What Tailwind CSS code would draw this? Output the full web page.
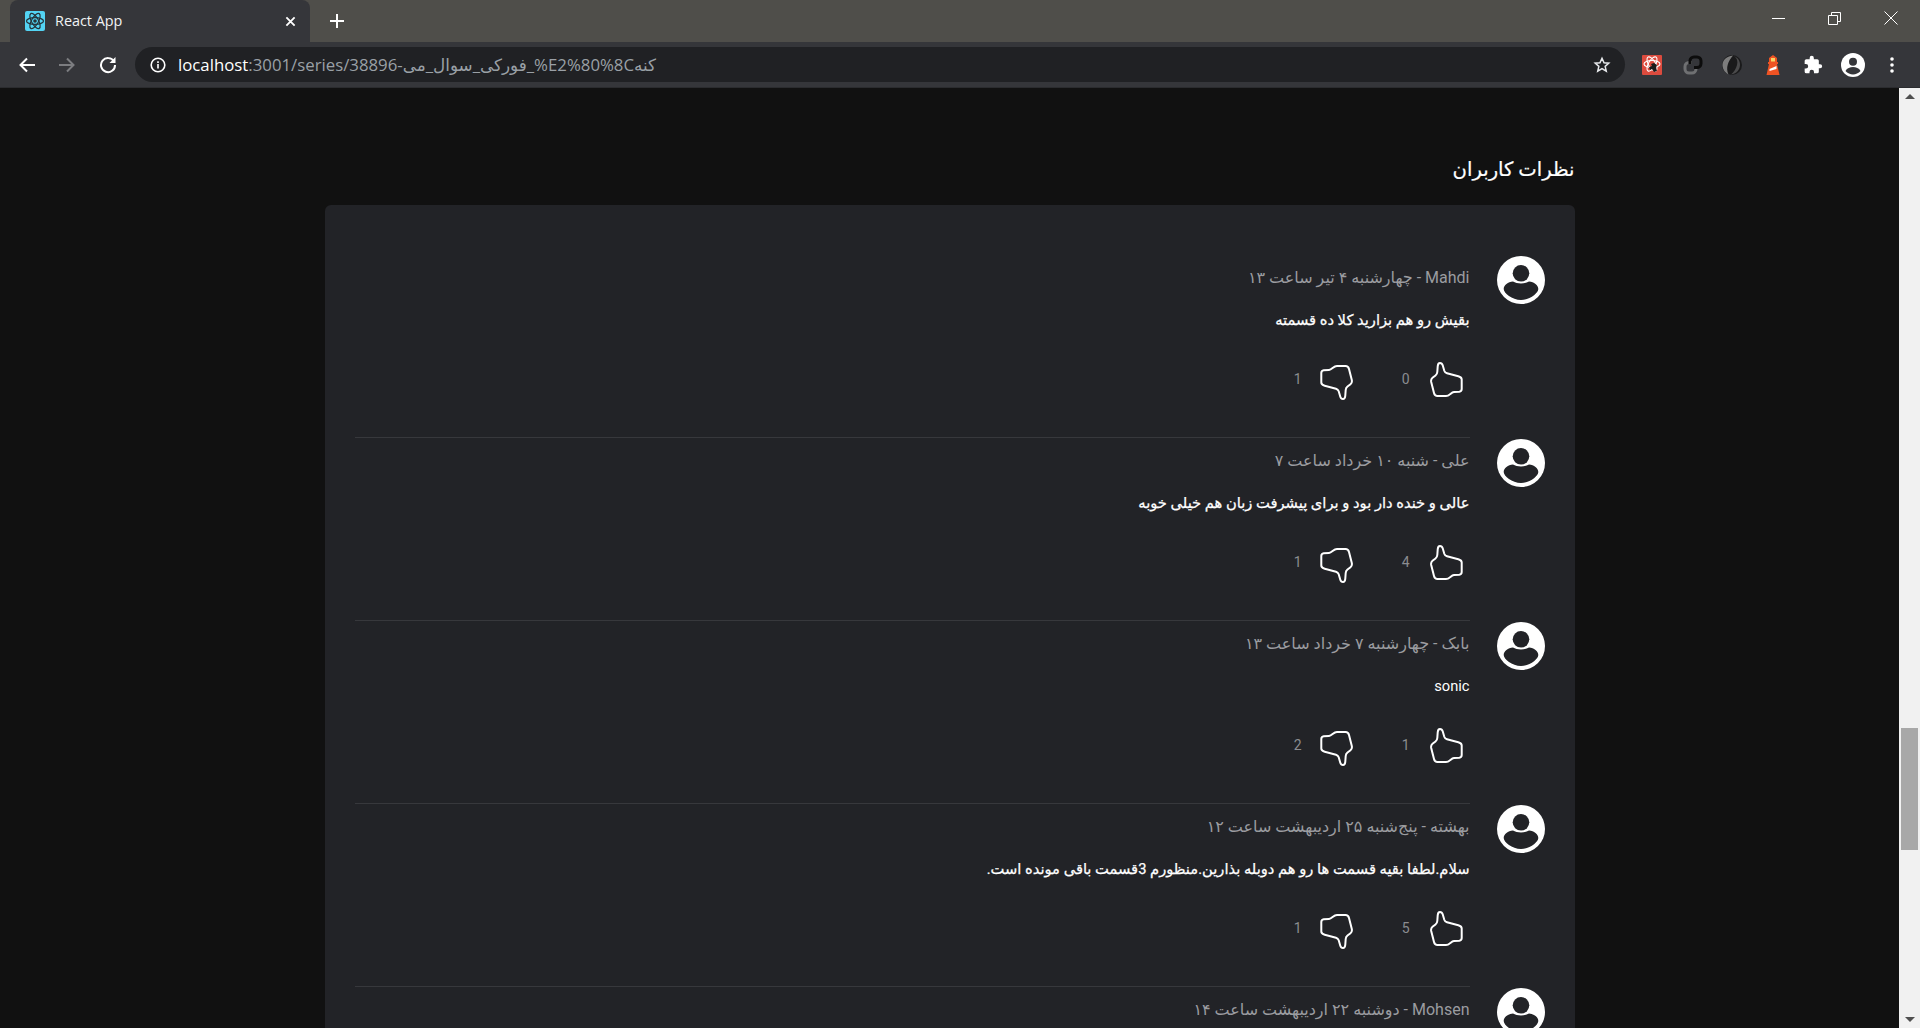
<!DOCTYPE html>
<html lang="fa">
  <head>
    <meta charset="UTF-8" />
    <script src="https://cdn.jsdelivr.net/npm/@tailwindcss/browser@4"></script>
    <title>React App</title>
  </head>
  <body class="h-screen overflow-hidden flex flex-col bg-[#111111] font-['Roboto','Noto_Sans','DejaVu_Sans',sans-serif]">
    <!-- window title bar -->
    <div class="h-[42px] shrink-0 bg-[#4f4e4a] flex items-center pl-[10px]">
      <div class="h-[42px] w-[300px] bg-[#35363a] rounded-t-[8px] flex items-center pl-[15px] pr-[14px] text-white">
        <svg class="w-[20px] h-[20px] shrink-0" viewBox="0 0 20 20">
          <rect width="20" height="20" rx="2" fill="#53d4f4" />
          <g fill="none" stroke="#26333a" stroke-width="1.200">
            <ellipse cx="10" cy="10" rx="8.500" ry="3.400" />
            <ellipse cx="10" cy="10" rx="8.500" ry="3.400" transform="rotate(60 10 10)" />
            <ellipse cx="10" cy="10" rx="8.500" ry="3.400" transform="rotate(120 10 10)" />
          </g>
          <circle cx="10" cy="10" r="1.800" fill="#26333a" />
        </svg>
        <span class="ml-[10px] text-[14.400px] font-['Open_Sans',sans-serif] text-[#f1f3f4]">React App</span>
        <svg class="ml-auto w-[11px] h-[11px]" viewBox="0 0 12 12" stroke="#fff" stroke-width="2"><path d="M1.500 1.500l9 9M10.500 1.500l-9 9" /></svg>
      </div>
      <svg class="ml-[20px] w-[14px] h-[14px]" viewBox="0 0 14 14" stroke="#fff" stroke-width="2"><path d="M7 0v14M0 7h14" /></svg>
      <!-- window controls -->
      <div class="ml-auto self-start flex items-center h-[36px] pr-[22px] gap-[43px]">
        <div class="w-[13px] h-px bg-white"></div>
        <svg class="w-[13px] h-[13px]" viewBox="0 0 13 13" fill="none" stroke="#fff"><path d="M.5 3.500h9v9h-9zM3.500 3.500v-3h9v9h-3" /></svg>
        <svg class="w-[14px] h-[14px]" viewBox="0 0 14 14" stroke="#fff"><path d="M.5.500l13 13M13.500.500l-13 13" /></svg>
      </div>
    </div>

    <!-- toolbar -->
    <div class="h-[46px] shrink-0 bg-[#35363a] flex items-center border-b border-[#2b2c2f]">
      <svg class="ml-[19px] w-[16px] h-[16px]" viewBox="0 0 16 16" fill="none" stroke="#fff" stroke-width="2"><path d="M16 8H2M8 1.500L1.500 8 8 14.500" /></svg>
      <svg class="ml-[24px] w-[16px] h-[16px]" viewBox="0 0 16 16" fill="none" stroke="#7c7d80" stroke-width="2"><path d="M0 8h14M8 1.500L14.500 8 8 14.500" /></svg>
      <svg class="ml-[24px] w-[18px] h-[18px]" viewBox="0 0 18 18" fill="none" stroke="#fff" stroke-width="2"><path d="M15 5.500A7 7 0 1 0 16 9" /><path d="M16.500 1v6h-6z" fill="#fff" stroke="none" /></svg>
      <div class="ml-[18px] w-[1490px] h-[35px] bg-[#202124] rounded-full flex items-center pl-[15px] pr-[14px]">
        <svg class="w-[16px] h-[16px] shrink-0" viewBox="0 0 16 16"><circle cx="8" cy="8" r="6.800" fill="none" stroke="#fff" stroke-width="1.600" /><path d="M7.200 7h1.600v4.500H7.200zM7.200 4.300h1.600v1.600H7.200z" fill="#fff" /></svg>
        <span class="ml-[12px] text-[16.800px] font-['Open_Sans','DejaVu_Sans',sans-serif] text-[#9aa0a6] whitespace-nowrap" dir="ltr"><span class="text-white">localhost</span>:3001/series/38896-فورکی_سوال_می_%E2%80%8Cکنه</span>
        <svg class="ml-auto w-[18px] h-[18px]" viewBox="0 0 24 24" fill="none" stroke="#e8eaed" stroke-width="2"><path d="M12 3l2.700 6 6.300.6-4.800 4.200 1.500 6.400L12 16.800 6.300 20.200l1.500-6.400L3 9.600 9.300 9z" /></svg>
      </div>
      <!-- extensions -->
      <div class="ml-[17px] flex items-center">
        <svg class="w-[20px] h-[20px]" viewBox="0 0 20 20">
          <rect width="20" height="20" rx="1" fill="#dc4b3e" />
          <g fill="none" stroke="#fff" stroke-width="1.100">
            <ellipse cx="10" cy="9" rx="8" ry="3.500" />
            <ellipse cx="10" cy="9" rx="8" ry="3.500" transform="rotate(60 10 9)" />
            <ellipse cx="10" cy="9" rx="8" ry="3.500" transform="rotate(120 10 9)" />
          </g>
          <path d="M9 9l3-1 3 2-1 3 1 3-3 1-2-3-2 1-1-3 3-1z" fill="#1b1b1b" />
        </svg>
        <svg class="ml-[21px] w-[20px] h-[20px]" viewBox="0 0 20 20" fill="none" stroke-width="3"><path d="M9 7.500H6a4 4 0 0 0-4 4v2.500a4 4 0 0 0 4 4h3a4 4 0 0 0 4-4" stroke="#6f7072" /><path d="M11 12.500h3a4 4 0 0 0 4-4V6a4 4 0 0 0-4-4h-3a4 4 0 0 0-4 4v3" stroke="#0c0c0c" /></svg>
        <svg class="ml-[19px] w-[20px] h-[20px]" viewBox="0 0 20 20"><circle cx="10" cy="10" r="10" fill="#1a1a1b" /><path d="M11 .5C4 1 0 6 .5 11c.4 4 3 7 6 8.500C3.500 13 6 6 11 .5z" fill="#7d7d7d" /><path d="M12 1c3 2 4 5 3 9-1 4-3 7-6 9.500 6-1 9-5 9-10 0-4-2.500-7-6-8.500z" fill="#4a4a4b" /></svg>
        <svg class="ml-[24px] w-[14px] h-[20px]" viewBox="0 0 14 20"><path d="M7 0l4 3v4h1v2h-1l2.500 11H.5L3 9H2V7h1V3z" fill="#ef5323" /><rect x="5" y="3" width="4" height="3.500" fill="#f6d365" /><path d="M3.500 14l7-3v3l-7 2z" fill="#fff" /></svg>
        <svg class="ml-[23px] w-[20px] h-[20px]" viewBox="0 0 24 24" fill="#fff"><path d="M20.500 11H19V7a2 2 0 0 0-2-2h-4V3.500a2.500 2.500 0 0 0-5 0V5H4a2 2 0 0 0-2 2v3.800h1.500a2.700 2.700 0 0 1 0 5.400H2V20a2 2 0 0 0 2 2h3.800v-1.500a2.700 2.700 0 0 1 5.400 0V22H17a2 2 0 0 0 2-2v-4h1.500a2.500 2.500 0 0 0 0-5z" /></svg>
        <svg class="ml-[18px] w-[24px] h-[24px]" viewBox="0 0 24 24"><circle cx="12" cy="12" r="12" fill="#fff" /><circle cx="12" cy="8.800" r="4" fill="#35363a" /><path d="M4.500 18c1.500-3 4.500-4 7.500-4s6 1 7.500 4c-4 4.500-11 4.500-15 0z" fill="#35363a" /></svg>
        <svg class="ml-[25px] w-[4px] h-[16px]" viewBox="0 0 4 16" fill="#fff"><circle cx="2" cy="2" r="1.800" /><circle cx="2" cy="8" r="1.800" /><circle cx="2" cy="14" r="1.800" /></svg>
      </div>
    </div>

    <div class="flex-1 flex min-h-0">
      <!-- page -->
      <main class="flex-1 min-w-0 overflow-hidden" dir="rtl">
        <div class="w-[1250px] mx-auto pt-[68px]">
          <h2 class="h-[28px] leading-[28px] text-[19.600px] text-white [-webkit-text-stroke:0.2px]">نظرات کاربران</h2>
          <section class="mt-[21px] bg-[#222327] rounded-[6px] pt-[50px] px-[30px] flex flex-col">
            <!-- comment 1 -->
            <article class="flex h-[183px] gap-[27px]">
              <svg class="w-[48px] h-[48px] mt-[1px] shrink-0" viewBox="0 0 48 48"><circle cx="24" cy="24" r="24" fill="#fff" /><circle cx="24" cy="17.300" r="8.300" fill="#222327" /><path d="M6.700 33C6.700 29 11 26 16 25.500C20 28 28 28 32 25.500C37 26 41.300 29 41.300 33C41.300 37 33 44 24 44C15 44 6.700 37 6.700 33Z" fill="#222327" /></svg>
              <div class="flex-1 border-b border-[#37383c]">
                <p class="text-[16px] leading-[24px] mt-[11px] text-[#9b9ca0]">Mahdi - چهارشنبه ۴ تیر ساعت ۱۳</p>
                <p class="text-[14.700px] leading-[20px] mt-[20px] text-white [-webkit-text-stroke:0.25px]">بقیش رو هم بزارید کلا ده قسمته</p>
                <div class="flex items-center mt-[32px] mr-[7px]">
                  <svg class="w-[33px] h-[35px]" viewBox="0 0 33 35" fill="none" stroke="#fff" stroke-width="2"><path d="M10 1C11.500 1 12.300 2 12.700 3.300L14.300 8.700C14.800 10.200 15.500 10.900 17 11.300L28.300 14.300C30.500 14.900 31.700 15.500 31.700 17.500L31.700 27C31.700 29 30.800 29.500 29.300 29.700L24 30C21 30.200 19.500 34 16 34L7.500 34C5.500 34 4.500 33 4 31L1.200 20C.8 18 1 17 2.500 15.800L5.500 13.500C6.800 12.500 7.200 11.500 7.300 10L7.700 4.500C7.800 2.500 8.500 1 10 1Z" /></svg>
                  <span class="mr-[20px] text-[14px] text-[#8b8c90]">0</span>
                  <svg class="mr-[49px] w-[33px] h-[35px] rotate-180 translate-y-[3px]" viewBox="0 0 33 35" fill="none" stroke="#fff" stroke-width="2"><path d="M10 1C11.500 1 12.300 2 12.700 3.300L14.300 8.700C14.800 10.200 15.500 10.900 17 11.300L28.300 14.300C30.500 14.900 31.700 15.500 31.700 17.500L31.700 27C31.700 29 30.800 29.500 29.300 29.700L24 30C21 30.200 19.500 34 16 34L7.500 34C5.500 34 4.500 33 4 31L1.200 20C.8 18 1 17 2.500 15.800L5.500 13.500C6.800 12.500 7.200 11.500 7.300 10L7.700 4.500C7.800 2.500 8.500 1 10 1Z" /></svg>
                  <span class="mr-[18px] text-[14px] text-[#8b8c90]">1</span>
                </div>
              </div>
            </article>
            <!-- comment 2 -->
            <article class="flex h-[183px] gap-[27px]">
              <svg class="w-[48px] h-[48px] mt-[1px] shrink-0" viewBox="0 0 48 48"><circle cx="24" cy="24" r="24" fill="#fff" /><circle cx="24" cy="17.300" r="8.300" fill="#222327" /><path d="M6.700 33C6.700 29 11 26 16 25.500C20 28 28 28 32 25.500C37 26 41.300 29 41.300 33C41.300 37 33 44 24 44C15 44 6.700 37 6.700 33Z" fill="#222327" /></svg>
              <div class="flex-1 border-b border-[#37383c]">
                <p class="text-[16px] leading-[24px] mt-[11px] text-[#9b9ca0]">علی - شنبه ۱۰ خرداد ساعت ۷</p>
                <p class="text-[14.700px] leading-[20px] mt-[20px] text-white [-webkit-text-stroke:0.25px]">عالی و خنده دار بود و برای پیشرفت زبان هم خیلی خوبه</p>
                <div class="flex items-center mt-[32px] mr-[7px]">
                  <svg class="w-[33px] h-[35px]" viewBox="0 0 33 35" fill="none" stroke="#fff" stroke-width="2"><path d="M10 1C11.500 1 12.300 2 12.700 3.300L14.300 8.700C14.800 10.200 15.500 10.900 17 11.300L28.300 14.300C30.500 14.900 31.700 15.500 31.700 17.500L31.700 27C31.700 29 30.800 29.500 29.300 29.700L24 30C21 30.200 19.500 34 16 34L7.500 34C5.500 34 4.500 33 4 31L1.200 20C.8 18 1 17 2.500 15.800L5.500 13.500C6.800 12.500 7.200 11.500 7.300 10L7.700 4.500C7.800 2.500 8.500 1 10 1Z" /></svg>
                  <span class="mr-[20px] text-[14px] text-[#8b8c90]">4</span>
                  <svg class="mr-[49px] w-[33px] h-[35px] rotate-180 translate-y-[3px]" viewBox="0 0 33 35" fill="none" stroke="#fff" stroke-width="2"><path d="M10 1C11.500 1 12.300 2 12.700 3.300L14.300 8.700C14.800 10.200 15.500 10.900 17 11.300L28.300 14.300C30.500 14.900 31.700 15.500 31.700 17.500L31.700 27C31.700 29 30.800 29.500 29.300 29.700L24 30C21 30.200 19.500 34 16 34L7.500 34C5.500 34 4.500 33 4 31L1.200 20C.8 18 1 17 2.500 15.800L5.500 13.500C6.800 12.500 7.200 11.500 7.300 10L7.700 4.500C7.800 2.500 8.500 1 10 1Z" /></svg>
                  <span class="mr-[18px] text-[14px] text-[#8b8c90]">1</span>
                </div>
              </div>
            </article>
            <!-- comment 3 -->
            <article class="flex h-[183px] gap-[27px]">
              <svg class="w-[48px] h-[48px] mt-[1px] shrink-0" viewBox="0 0 48 48"><circle cx="24" cy="24" r="24" fill="#fff" /><circle cx="24" cy="17.300" r="8.300" fill="#222327" /><path d="M6.700 33C6.700 29 11 26 16 25.500C20 28 28 28 32 25.500C37 26 41.300 29 41.300 33C41.300 37 33 44 24 44C15 44 6.700 37 6.700 33Z" fill="#222327" /></svg>
              <div class="flex-1 border-b border-[#37383c]">
                <p class="text-[16px] leading-[24px] mt-[11px] text-[#9b9ca0]">بابک - چهارشنبه ۷ خرداد ساعت ۱۳</p>
                <p class="text-[14.700px] leading-[20px] mt-[20px] text-white">sonic</p>
                <div class="flex items-center mt-[32px] mr-[7px]">
                  <svg class="w-[33px] h-[35px]" viewBox="0 0 33 35" fill="none" stroke="#fff" stroke-width="2"><path d="M10 1C11.500 1 12.300 2 12.700 3.300L14.300 8.700C14.800 10.200 15.500 10.900 17 11.300L28.300 14.300C30.500 14.900 31.700 15.500 31.700 17.500L31.700 27C31.700 29 30.800 29.500 29.300 29.700L24 30C21 30.200 19.500 34 16 34L7.500 34C5.500 34 4.500 33 4 31L1.200 20C.8 18 1 17 2.500 15.800L5.500 13.500C6.800 12.500 7.200 11.500 7.300 10L7.700 4.500C7.800 2.500 8.500 1 10 1Z" /></svg>
                  <span class="mr-[20px] text-[14px] text-[#8b8c90]">1</span>
                  <svg class="mr-[49px] w-[33px] h-[35px] rotate-180 translate-y-[3px]" viewBox="0 0 33 35" fill="none" stroke="#fff" stroke-width="2"><path d="M10 1C11.500 1 12.300 2 12.700 3.300L14.300 8.700C14.800 10.200 15.500 10.900 17 11.300L28.300 14.300C30.500 14.900 31.700 15.500 31.700 17.500L31.700 27C31.700 29 30.800 29.500 29.300 29.700L24 30C21 30.200 19.500 34 16 34L7.500 34C5.500 34 4.500 33 4 31L1.200 20C.8 18 1 17 2.500 15.800L5.500 13.500C6.800 12.500 7.200 11.500 7.300 10L7.700 4.500C7.800 2.500 8.500 1 10 1Z" /></svg>
                  <span class="mr-[18px] text-[14px] text-[#8b8c90]">2</span>
                </div>
              </div>
            </article>
            <!-- comment 4 -->
            <article class="flex h-[183px] gap-[27px]">
              <svg class="w-[48px] h-[48px] mt-[1px] shrink-0" viewBox="0 0 48 48"><circle cx="24" cy="24" r="24" fill="#fff" /><circle cx="24" cy="17.300" r="8.300" fill="#222327" /><path d="M6.700 33C6.700 29 11 26 16 25.500C20 28 28 28 32 25.500C37 26 41.300 29 41.300 33C41.300 37 33 44 24 44C15 44 6.700 37 6.700 33Z" fill="#222327" /></svg>
              <div class="flex-1 border-b border-[#37383c]">
                <p class="text-[16px] leading-[24px] mt-[11px] text-[#9b9ca0]">بهشته - پنج‌شنبه ۲۵ اردیبهشت ساعت ۱۲</p>
                <p class="text-[14.700px] leading-[20px] mt-[20px] text-white [-webkit-text-stroke:0.25px]">سلام.لطفا بقیه قسمت ها رو هم دوبله بذارین.منظورم 3قسمت باقی مونده است.</p>
                <div class="flex items-center mt-[32px] mr-[7px]">
                  <svg class="w-[33px] h-[35px]" viewBox="0 0 33 35" fill="none" stroke="#fff" stroke-width="2"><path d="M10 1C11.500 1 12.300 2 12.700 3.300L14.300 8.700C14.800 10.200 15.500 10.900 17 11.300L28.300 14.300C30.500 14.900 31.700 15.500 31.700 17.500L31.700 27C31.700 29 30.800 29.500 29.300 29.700L24 30C21 30.200 19.500 34 16 34L7.500 34C5.500 34 4.500 33 4 31L1.200 20C.8 18 1 17 2.500 15.800L5.500 13.500C6.800 12.500 7.200 11.500 7.300 10L7.700 4.500C7.800 2.500 8.500 1 10 1Z" /></svg>
                  <span class="mr-[20px] text-[14px] text-[#8b8c90]">5</span>
                  <svg class="mr-[49px] w-[33px] h-[35px] rotate-180 translate-y-[3px]" viewBox="0 0 33 35" fill="none" stroke="#fff" stroke-width="2"><path d="M10 1C11.500 1 12.300 2 12.700 3.300L14.300 8.700C14.800 10.200 15.500 10.900 17 11.300L28.300 14.300C30.500 14.900 31.700 15.500 31.700 17.500L31.700 27C31.700 29 30.800 29.500 29.300 29.700L24 30C21 30.200 19.500 34 16 34L7.500 34C5.500 34 4.500 33 4 31L1.200 20C.8 18 1 17 2.500 15.800L5.500 13.500C6.800 12.500 7.200 11.500 7.300 10L7.700 4.500C7.800 2.500 8.500 1 10 1Z" /></svg>
                  <span class="mr-[18px] text-[14px] text-[#8b8c90]">1</span>
                </div>
              </div>
            </article>
            <!-- comment 5 -->
            <article class="flex h-[183px] gap-[27px]">
              <svg class="w-[48px] h-[48px] mt-[1px] shrink-0" viewBox="0 0 48 48"><circle cx="24" cy="24" r="24" fill="#fff" /><circle cx="24" cy="17.300" r="8.300" fill="#222327" /><path d="M6.700 33C6.700 29 11 26 16 25.500C20 28 28 28 32 25.500C37 26 41.300 29 41.300 33C41.300 37 33 44 24 44C15 44 6.700 37 6.700 33Z" fill="#222327" /></svg>
              <div class="flex-1">
                <p class="text-[16px] leading-[24px] mt-[11px] text-[#9b9ca0]">Mohsen - دوشنبه ۲۲ اردیبهشت ساعت ۱۴</p>
              </div>
            </article>
          </section>
        </div>
      </main>

      <!-- scrollbar -->
      <div class="w-[21px] shrink-0 bg-[#f1f1f1] flex flex-col items-center relative">
        <div class="mt-[6px] w-0 h-0 border-x-[5px] border-x-transparent border-b-[5px] border-b-[#505050]"></div>
        <div class="absolute top-[640px] left-[2px] w-[17px] h-[122px] bg-[#a8a8a8]"></div>
        <div class="mt-auto mb-[6px] w-0 h-0 border-x-[5px] border-x-transparent border-t-[5px] border-t-[#505050]"></div>
      </div>
    </div>
  </body>
</html>
